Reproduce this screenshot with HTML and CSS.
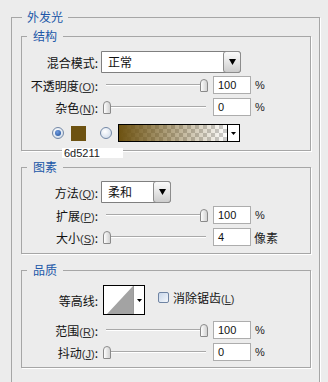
FILE: index.html
```html
<!DOCTYPE html>
<html lang="zh-CN">
<head>
    <meta charset="UTF-8">
    <meta name="viewport" content="width=device-width, initial-scale=1.0">
    <title>外发光</title>
    <link rel="stylesheet" href="styles.css">
</head>
<body>
    <!-- Outer glow panel -->
    <fieldset class="panel">
        <legend>外发光</legend>

        <!-- Structure -->
        <fieldset class="group group-structure">
            <legend>结构</legend>
            <div class="row row-select">
                <span class="lbl">混合模式:</span>
                <div class="select select-blend">
                    <span class="select-val">正常</span>
                    <span class="select-btn"><svg width="7" height="6" viewBox="0 0 7 6"><path d="M0 0H7L3.5 6Z"/></svg></span>
                </div>
            </div>
            <div class="row mt3">
                <span class="lbl">不透明度<span class="key">(<u>O</u>)</span>:</span>
                <div class="slider"><span class="thumb thumb-max"></span></div>
                <span class="num">100</span>
                <span class="unit">%</span>
            </div>
            <div class="row mt4">
                <span class="lbl">杂色<span class="key">(<u>N</u>)</span>:</span>
                <div class="slider"><span class="thumb"></span></div>
                <span class="num">0</span>
                <span class="unit">%</span>
            </div>
            <div class="row color-row mt8">
                <span class="radio checked"></span>
                <span class="swatch"></span>
                <span class="radio radio-grad"></span>
                <div class="grad">
                    <span class="grad-fill"></span>
                    <span class="grad-btn"><svg width="5" height="3" viewBox="0 0 5 3"><path d="M0 0H5L2.5 3Z"/></svg></span>
                </div>
                <span class="tip">6d5211</span>
            </div>
        </fieldset>

        <!-- Elements -->
        <fieldset class="group group-elements">
            <legend>图素</legend>
            <div class="row row-select">
                <span class="lbl">方法<span class="key">(<u>Q</u>)</span>:</span>
                <div class="select select-method">
                    <span class="select-val">柔和</span>
                    <span class="select-btn"><svg width="7" height="6" viewBox="0 0 7 6"><path d="M0 0H7L3.5 6Z"/></svg></span>
                </div>
            </div>
            <div class="row mt3">
                <span class="lbl">扩展<span class="key">(<u>P</u>)</span>:</span>
                <div class="slider"><span class="thumb thumb-max"></span></div>
                <span class="num">100</span>
                <span class="unit">%</span>
            </div>
            <div class="row mt4">
                <span class="lbl">大小<span class="key">(<u>S</u>)</span>:</span>
                <div class="slider"><span class="thumb"></span></div>
                <span class="num">4</span>
                <span class="unit unit-cjk">像素</span>
            </div>
        </fieldset>

        <!-- Quality -->
        <fieldset class="group group-quality">
            <legend>品质</legend>
            <div class="row row-contour">
                <span class="lbl">等高线:</span>
                <div class="contour">
                    <svg class="contour-pic" width="29" height="28" viewBox="0 0 29 28"><polygon points="3,28 29,0 29,28" fill="#a3a3a3"/></svg>
                    <span class="contour-btn"><svg width="5" height="3" viewBox="0 0 5 3"><path d="M0 0H5L2.5 3Z"/></svg></span>
                </div>
                <span class="check"></span>
                <span class="check-lbl">消除锯齿<span class="key">(<u>L</u>)</span></span>
            </div>
            <div class="row mt6">
                <span class="lbl">范围<span class="key">(<u>R</u>)</span>:</span>
                <div class="slider"><span class="thumb thumb-max"></span></div>
                <span class="num">100</span>
                <span class="unit">%</span>
            </div>
            <div class="row mt4">
                <span class="lbl">抖动<span class="key">(<u>J</u>)</span>:</span>
                <div class="slider"><span class="thumb"></span></div>
                <span class="num">0</span>
                <span class="unit">%</span>
            </div>
        </fieldset>
    </fieldset>
</body>
</html>
```

FILE: styles.css
```css
html, body {
    margin: 0;
    height: 100%;
    overflow: hidden;
}
body {
    background: #ececec;
    color: #111;
    font-family: "Noto Sans CJK SC", sans-serif;
    font-size: 12px;
}

/* Group boxes */
fieldset {
    margin: 0;
    padding: 0;
    min-width: 0;
    border: 1px solid #a6a6a6;
    box-shadow: 1px 1px 0 #fff;
}
legend {
    font-size: 12px;
    line-height: 16px;
    color: #2057a8;
    margin-left: 5px;
    padding: 0 6px;
}
.panel {
    margin: 9px 8px 0 11px;
    padding: 0 8px 40px 9px;
}
.panel > legend {
    margin-left: 1px;
    padding: 0 5px;
}
.group {
    margin-top: 8px;
}
.group-structure {
    margin-top: 3px;
    padding: 7px 0 8px;
}
.group-elements {
    padding: 6px 0 7px;
}
.group-quality {
    padding: 7px 0 6px;
}

/* Rows */
.row {
    display: flex;
    align-items: center;
    height: 18px;
    position: relative;
}
.row-select { height: 22px; }
.row-contour { height: 30px; }
.mt3 { margin-top: 3px; }
.mt4 { margin-top: 4px; }
.mt6 { margin-top: 6px; }
.mt8 { margin-top: 8px; }

.lbl {
    flex: none;
    width: 76px;
    margin-right: 3px;
    text-align: right;
    white-space: nowrap;
}
.key {
    font-family: "Liberation Sans", sans-serif;
    font-size: 11px;
    color: #333;
}

/* Dropdowns */
.select {
    display: flex;
    box-sizing: border-box;
    height: 22px;
    border: 1px solid #7f7f7f;
    border-radius: 0 3px 3px 0;
    background: #fff;
}
.select-blend { width: 140px; }
.select-method { width: 70px; }
.select-val {
    flex: 1;
    padding-left: 6px;
    line-height: 20px;
}
.select-btn {
    width: 16px;
    margin: -1px -1px -1px 0;
    border: 1px solid #8c8c8c;
    border-radius: 3px;
    background: linear-gradient(#fbfbfb, #e6e6e6 50%, #cdcdcd);
    display: flex;
    align-items: center;
    justify-content: center;
}

/* Sliders */
.slider {
    flex: none;
    width: 108px;
    height: 14px;
    display: flex;
    align-items: center;
    background: linear-gradient(#a9a9a9 0 1px, #fff 1px 2px) 5px 50% / 100px 2px no-repeat;
}
.thumb {
    width: 8px;
    height: 13px;
    margin-left: 2px;
    box-sizing: border-box;
    border: 1px solid #8a8a8a;
    border-radius: 4px 4px 1px 1px;
    background: linear-gradient(to right, #fdfdfd, #d2d2d2);
}
.thumb-max {
    margin-left: auto;
    margin-right: 1px;
}
.num {
    box-sizing: border-box;
    width: 38px;
    height: 18px;
    margin-left: 4px;
    padding-left: 4px;
    border: 1px solid #adadad;
    background: #fff;
    font-family: "Liberation Sans", sans-serif;
    font-size: 11px;
    line-height: 16px;
}
.unit {
    margin-left: 4px;
    font-family: "Liberation Sans", sans-serif;
    font-size: 11px;
    color: #222;
}
.unit-cjk {
    margin-left: 3px;
    font-family: "Noto Sans CJK SC", sans-serif;
    font-size: 12px;
}

/* Color choice */
.color-row {
    padding-left: 30px;
}
.radio {
    width: 12px;
    height: 12px;
    box-sizing: border-box;
    border: 1px solid #7388a6;
    border-radius: 50%;
    background: radial-gradient(circle at 40% 35%, #ffffff, #c8d5e6);
    display: flex;
    align-items: center;
    justify-content: center;
}
.radio.checked::after {
    content: "";
    width: 6px;
    height: 6px;
    border-radius: 50%;
    background: radial-gradient(circle at 40% 35%, #6f9be0, #1f4f96);
}
.swatch {
    width: 15px;
    height: 15px;
    margin-left: 7px;
    background: #6d5211;
}
.radio-grad {
    margin-left: 14px;
}
.grad {
    display: flex;
    box-sizing: border-box;
    width: 122px;
    height: 18px;
    margin-left: 6px;
    border: 1px solid #000;
}
.grad-fill {
    flex: 1;
    background:
        linear-gradient(to right, #6d5211, rgba(109, 82, 17, 0)),
        repeating-conic-gradient(#cdcdcd 0 25%, #fff 0 50%) 0 0 / 8px 8px;
}
.grad-btn {
    width: 11px;
    border-left: 1px solid #000;
    background: #fff;
    display: flex;
    align-items: center;
    justify-content: center;
}
.tip {
    position: absolute;
    left: 40px;
    top: 24px;
    width: 59px;
    height: 10px;
    padding-left: 2px;
    background: #fff;
    font-family: "Liberation Sans", sans-serif;
    font-size: 11px;
    line-height: 10px;
    color: #222;
}

/* Contour */
.contour {
    display: flex;
    box-sizing: border-box;
    width: 42px;
    height: 30px;
    margin-left: 2px;
    border: 1px solid #000;
    background: #fff;
}
.contour-pic {
    display: block;
}
.contour-btn {
    flex: 1;
    border-left: 1px solid #9a9a9a;
    display: flex;
    align-items: center;
    justify-content: center;
}
.check {
    width: 11px;
    height: 11px;
    margin-left: 13px;
    margin-top: -5px;
    box-sizing: border-box;
    border: 1px solid #6f84a3;
    border-radius: 2px;
    background: linear-gradient(135deg, #c9d7ea, #f4f7fb);
}
.check-lbl {
    margin-left: 4px;
    margin-top: -5px;
}
```
